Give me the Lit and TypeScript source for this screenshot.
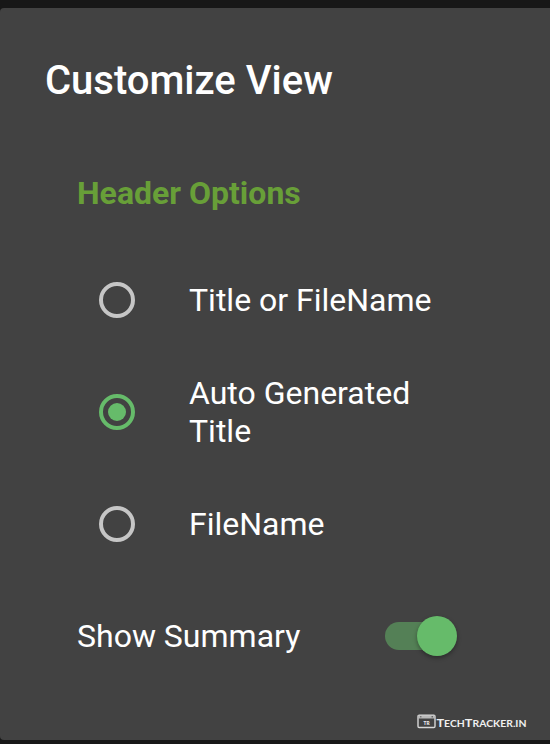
import { LitElement, html, css, svg } from "lit";
import { customElement, property, state } from "lit/decorators.js";

@customElement("radio-row")
class RadioRow extends LitElement {
  @property() label = "";
  @property({ type: Boolean }) checked = false;

  static styles = css`
    :host { display: flex; align-items: center; height: 112px; padding-left: 99px; box-sizing: border-box; }
    .mark { width: 36px; height: 36px; flex: none; margin-right: 54px; color: #c6c6c6; }
    .on { color: #66bb6a; }
    .label { width: 250px; font-size: 32px; line-height: 38px; color: #fff; }
  `;

  render() {
    return html`
      <svg class="mark ${this.checked ? "on" : ""}" viewBox="0 0 36 36">
        <circle cx="18" cy="18" r="16" fill="none" stroke="currentColor" stroke-width="4" />
        ${this.checked ? svg`<circle cx="18" cy="18" r="9" fill="currentColor" />` : null}
      </svg>
      <span class="label">${this.label}</span>
    `;
  }
}

@customElement("toggle-switch")
class ToggleSwitch extends LitElement {
  static styles = css`
    :host { display: flex; align-items: center; width: 72px; height: 40px; }
    .track { width: 68px; height: 28px; border-radius: 14px; background: #548056; }
    .thumb {
      width: 40px; height: 40px; flex: none; margin-left: -36px; border-radius: 50%;
      background: #66bb6a; box-shadow: 0 2px 4px rgba(0, 0, 0, 0.35);
    }
  `;

  render() {
    return html`<div class="track"></div><div class="thumb"></div>`;
  }
}

@customElement("app-root")
class AppRoot extends LitElement {
  @state() private options = ["Title or FileName", "Auto Generated Title", "FileName"];
  @state() private selected = 1;

  static styles = css`
    :host {
      display: block; height: 744px; box-sizing: border-box; padding: 8px 0 4px;
      background: #171717; font-family: Roboto, sans-serif; color: #fff; overflow: hidden;
    }
    .dialog {
      height: 732px; box-sizing: border-box; background: #424242;
      border-radius: 4px 0 0 4px; display: flex; flex-direction: column;
    }
    .title { margin: 0; padding: 49px 0 0 45px; font-size: 40px; font-weight: 500; line-height: 48px; white-space: nowrap; }
    .section { margin: 0; padding: 69px 0 0 77px; height: 131px; box-sizing: border-box; font-size: 32px; font-weight: 700; line-height: 38px; color: #689f38; }
    .options { display: flex; flex-direction: column; padding-top: 8px; }
    .summary { display: flex; align-items: center; justify-content: space-between; height: 112px; padding: 0 93px 0 77px; font-size: 32px; line-height: 38px; }
    .brand { display: flex; align-items: center; align-self: flex-end; margin: 20px 23px 0 0; height: 18px; }
    .logo { width: 19px; height: 15px; }
    .brand-name { width: 91px; height: 16px; overflow: visible; }
    .word { font-family: Lato, sans-serif; font-weight: 700; font-size: 8.7px; fill: #f0f0f0; }
    .cap { font-size: 10.6px; }
    .mini { font-family: Lato, sans-serif; font-weight: 900; font-size: 5.5px; fill: #f0f0f0; }
  `;

  render() {
    return html`
      <div class="dialog">
        <h1 class="title">Customize View</h1>
        <h2 class="section">Header Options</h2>
        <div class="options">
          ${this.options.map((o, i) => html`<radio-row .label=${o} .checked=${i === this.selected}></radio-row>`)}
        </div>
        <div class="summary">
          <span>Show Summary</span>
          <toggle-switch></toggle-switch>
        </div>
        <div class="brand">
          <svg class="logo" viewBox="0 0 19 15">
            <rect x="1" y="1.2" width="17" height="12.3" rx="1.2" fill="none" stroke="#d8d8d8" stroke-width="1.4" />
            <path d="M1 3H18" stroke="#b8b8b8" stroke-width="3" />
            <path d="M3.2 2.8H4.4M14.5 2.8H16" stroke="#424242" stroke-width="1" />
            <text class="mini" x="6.5" y="10.8" textLength="6" lengthAdjust="spacingAndGlyphs">TR</text>
          </svg>
          <svg class="brand-name" viewBox="0 0 91 16">
            <text class="word" x="0.5" y="13.6" textLength="90" lengthAdjust="spacingAndGlyphs"><tspan class="cap">T</tspan>ECH<tspan class="cap">T</tspan>RACKER.IN</text>
          </svg>
        </div>
      </div>
    `;
  }
}
